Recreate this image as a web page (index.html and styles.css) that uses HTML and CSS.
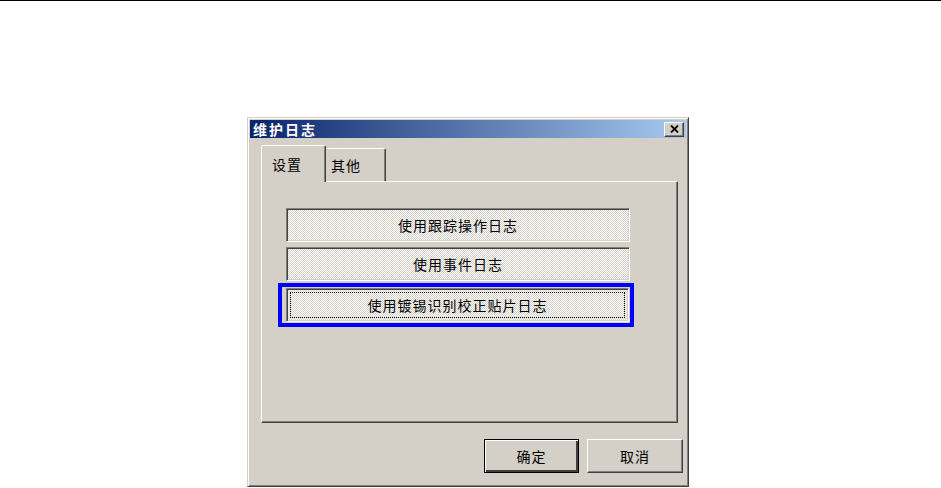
FILE: index.html
```html
<!DOCTYPE html>
<html lang="zh-CN">
<head>
    <meta charset="UTF-8">
    <meta name="viewport" content="width=device-width, initial-scale=1.0">
    <title>维护日志</title>
    <link rel="stylesheet" href="styles.css">
</head>
<body>
    <div class="topstrek"></div>

    <div class="vindu">
        <div class="tittel">
            <span class="tittel-tekst">维护日志</span>
            <button class="lukk" aria-label="关闭">
                <svg width="9" height="8" viewBox="0 0 9 8">
                    <path d="M1 0.5 L8 7.5 M8 0.5 L1 7.5" stroke="#000" stroke-width="1.8" fill="none"/>
                </svg>
            </button>
        </div>

        <div class="faner">
            <div class="fane aktiv">设置</div>
            <div class="fane">其他</div>
        </div>

        <div class="panel">
            <div class="knapp-liste">
                <div class="trykk"><span class="etikett">使用跟踪操作日志</span></div>
                <div class="trykk"><span class="etikett">使用事件日志</span></div>
                <div class="markering">
                    <div class="trykk valgt"><span class="etikett">使用镀锡识别校正贴片日志</span></div>
                </div>
            </div>
        </div>

        <div class="bunn">
            <button class="knapp standard">确定</button>
            <button class="knapp">取消</button>
        </div>
    </div>
</body>
</html>
```

FILE: styles.css
```css
body {
    margin: 0;
    background-color: #ffffff;
    font-family: "Noto Sans CJK SC", "Liberation Sans", sans-serif;
    font-size: 13px;
    color: #000000;
}
.topstrek {
    height: 1px;
    background-color: #000000;
}
.vindu {
    box-sizing: border-box;
    width: 442px;
    height: 370px;
    margin: 116px 0 0 247px;
    padding: 2px;
    background-color: #d4d0c8;
    border: 1px solid;
    border-color: #d4d0c8 #404040 #404040 #d4d0c8;
    box-shadow: inset 1px 1px #ffffff, inset -1px -1px #808080;
    display: flex;
    flex-direction: column;
}
.tittel {
    height: 18px;
    background: linear-gradient(to right, #0a246a, #a6caf0);
    display: flex;
    align-items: center;
    justify-content: space-between;
    padding: 0 2px 0 3px;
}
.tittel-tekst {
    color: #ffffff;
    font-weight: bold;
    font-size: 14px;
    letter-spacing: 2px;
    line-height: 18px;
}
.lukk {
    box-sizing: border-box;
    width: 20px;
    height: 15px;
    padding: 0;
    background-color: #d4d0c8;
    border: 1px solid;
    border-color: #ffffff #404040 #404040 #ffffff;
    box-shadow: inset -1px -1px #808080;
    display: flex;
    align-items: center;
    justify-content: center;
}
.faner {
    display: flex;
    align-items: flex-end;
    margin: 7px 0 0 11px;
    position: relative;
    z-index: 1;
}
.fane {
    box-sizing: border-box;
    height: 33px;
    width: 60px;
    padding-left: 5px;
    display: flex;
    align-items: center;
    letter-spacing: 1px;
    font-size: 14px;
    background-color: #d4d0c8;
    border-top: 1px solid #ffffff;
    border-right: 1px solid #404040;
    box-shadow: inset -1px 0 #808080;
    border-radius: 0 2px 0 0;
}
.fane.aktiv {
    height: 37px;
    width: 65px;
    padding-left: 10px;
    margin-bottom: -1px;
    border-left: 1px solid #ffffff;
    border-radius: 2px 2px 0 0;
}
.panel {
    box-sizing: border-box;
    width: 417px;
    height: 242px;
    margin-left: 11px;
    border: 1px solid;
    border-color: #ffffff #404040 #404040 #ffffff;
    box-shadow: inset -1px -1px #808080;
    padding: 26px 0 0 24px;
}
.knapp-liste {
    display: flex;
    flex-direction: column;
    gap: 5px;
    width: 344px;
}
.trykk {
    box-sizing: border-box;
    height: 34px;
    padding: 3px;
    display: flex;
    border: 1px solid;
    border-color: #808080 #ffffff #ffffff #808080;
    box-shadow: inset 1px 1px #404040, inset -1px -1px #d4d0c8;
    background: repeating-conic-gradient(#ffffff 0 25%, #d4d0c8 0 50%) 0 0 / 2px 2px;
}
.markering {
    width: 356px;
    box-sizing: border-box;
    margin: -3px 0 0 -8px;
    padding: 1px 1px 1px 4px;
    border: 4px solid #0000ff;
}
.etikett {
    flex: 1;
    display: flex;
    align-items: center;
    justify-content: center;
    font-size: 14px;
    letter-spacing: 1px;
    border: 1px dotted transparent;
}
.valgt .etikett {
    border-color: #000000;
}
.bunn {
    display: flex;
    justify-content: flex-end;
    gap: 8px;
    margin-top: 16px;
    padding-right: 3px;
}
.knapp {
    box-sizing: border-box;
    width: 96px;
    height: 34px;
    padding: 0;
    font-family: inherit;
    font-size: 14px;
    letter-spacing: 1px;
    background-color: #d4d0c8;
    border: 1px solid;
    border-color: #ffffff #404040 #404040 #ffffff;
    box-shadow: inset -1px -1px #808080;
}
.knapp.standard {
    width: 95px;
    border-color: #000000;
    box-shadow: inset 1px 1px #ffffff, inset -2px -2px #404040, inset -1px -1px #808080;
}
```
